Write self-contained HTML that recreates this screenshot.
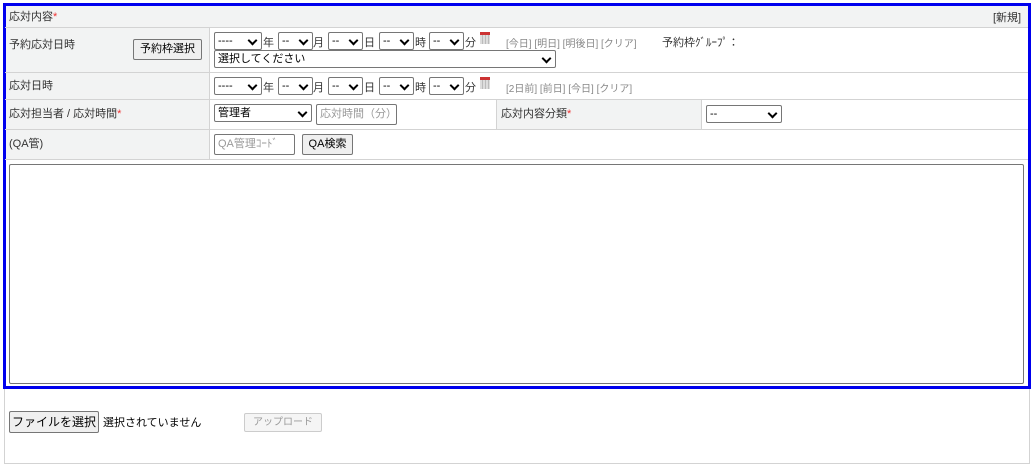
<!DOCTYPE html><html><head><meta charset="utf-8"><style>
*{box-sizing:border-box;margin:0;padding:0}
body{width:1033px;height:468px;background:#fff;font-family:"Liberation Sans","Noto Sans CJK JP",sans-serif;font-size:11px;color:#333;position:relative;overflow:hidden}
.a{position:absolute}
.sel{position:absolute;height:18px;border:1px solid #767676;border-radius:2px;background:#fff;font-size:11px;padding-left:3px;line-height:16px;color:#000}
.sel::after{content:"";position:absolute;right:5px;top:4px;width:5px;height:5px;border-right:2px solid #000;border-bottom:2px solid #000;transform:rotate(45deg)}
.btn{position:absolute;border:1px solid #767676;border-radius:2px;background:#efefef;font-size:11px;text-align:center;color:#000}
.inp{position:absolute;border:1px solid #767676;border-radius:2px;background:#fff;color:#999;font-size:11px;padding-left:3px}
.hl{position:absolute;left:5px;right:5px;height:1px;background:#d3d3d3}
.cal{position:absolute;width:10px;height:12px;background:repeating-linear-gradient(90deg,#ddd 0 2px,#bbb 2px 3px);border-top:3px solid #c33}
.lk{position:absolute;color:#888;font-size:10px}
.r{color:#e33}
</style></head><body>
<div class="a" style="left:4px;top:388px;width:1026px;height:76px;border:1px solid #d3d3d3;border-top:none"></div>
<div class="a" style="left:3px;top:3px;width:1028px;height:386px;border:3px solid #0000ee"></div>
<div class="a" style="left:6px;top:6px;width:1022px;height:21px;background:#f2f3f3"></div>
<div class="a" style="left:6px;top:27px;width:203px;height:132px;background:#f2f3f3"></div>
<div class="a" style="left:496px;top:99px;width:205px;height:30px;background:#f2f3f3"></div>
<div class="hl" style="top:27px"></div><div class="hl" style="top:72px"></div><div class="hl" style="top:99px"></div><div class="hl" style="top:129px"></div><div class="hl" style="top:159px"></div>
<div class="a" style="left:209px;top:27px;width:1px;height:132px;background:#d3d3d3"></div>
<div class="a" style="left:496px;top:99px;width:1px;height:30px;background:#d3d3d3"></div>
<div class="a" style="left:701px;top:99px;width:1px;height:30px;background:#d3d3d3"></div>
<div class="a" style="left:9px;top:8px">応対内容<span class="r">*</span></div>
<div class="a" style="left:993px;top:9px">[新規]</div>
<div class="a" style="left:9px;top:36px">予約応対日時</div>
<div class="btn" style="left:133px;top:39px;width:69px;height:21px;line-height:19px">予約枠選択</div>
<div class="a" style="left:9px;top:77px">応対日時</div>
<div class="a" style="left:9px;top:105px">応対担当者 / 応対時間<span class="r">*</span></div>
<div class="a" style="left:9px;top:135px">(QA管)</div>
<div class="sel" style="left:214px;top:32px;width:48px">----</div><div class="a" style="left:263px;top:34px">年</div>
<div class="sel" style="left:278px;top:32px;width:35px">--</div><div class="a" style="left:313px;top:34px">月</div>
<div class="sel" style="left:328px;top:32px;width:35px">--</div><div class="a" style="left:364px;top:34px">日</div>
<div class="sel" style="left:379px;top:32px;width:35px">--</div><div class="a" style="left:415px;top:34px">時</div>
<div class="sel" style="left:429px;top:32px;width:35px">--</div><div class="a" style="left:465px;top:34px">分</div>
<div class="cal" style="left:480px;top:32px"></div>
<div class="lk" style="left:506px;top:35px">[今日] [明日] [明後日] [クリア]</div>
<div class="a" style="left:662px;top:34px">予約枠ｸﾞﾙｰﾌﾟ：</div>
<div class="sel" style="left:214px;top:50px;width:342px">選択してください</div>
<div class="sel" style="left:214px;top:77px;width:48px">----</div><div class="a" style="left:263px;top:79px">年</div>
<div class="sel" style="left:278px;top:77px;width:35px">--</div><div class="a" style="left:313px;top:79px">月</div>
<div class="sel" style="left:328px;top:77px;width:35px">--</div><div class="a" style="left:364px;top:79px">日</div>
<div class="sel" style="left:379px;top:77px;width:35px">--</div><div class="a" style="left:415px;top:79px">時</div>
<div class="sel" style="left:429px;top:77px;width:35px">--</div><div class="a" style="left:465px;top:79px">分</div>
<div class="cal" style="left:480px;top:77px"></div>
<div class="lk" style="left:506px;top:80px">[2日前] [前日] [今日] [クリア]</div>
<div class="sel" style="left:214px;top:104px;width:98px">管理者</div>
<div class="inp" style="left:316px;top:104px;width:81px;height:21px;line-height:19px">応対時間（分）</div>
<div class="a" style="left:501px;top:105px">応対内容分類<span class="r">*</span></div>
<div class="sel" style="left:706px;top:105px;width:76px">--</div>
<div class="inp" style="left:214px;top:134px;width:81px;height:21px;line-height:19px">QA管理ｺｰﾄﾞ</div>
<div class="btn" style="left:302px;top:134px;width:51px;height:21px;line-height:19px">QA検索</div>
<div class="a" style="left:9px;top:164px;width:1015px;height:220px;border:1px solid #767676;border-radius:2px"></div>
<div class="btn" style="left:9px;top:411px;width:90px;height:22px;line-height:20px;font-size:12px">ファイルを選択</div>
<div class="a" style="left:103px;top:414px;font-size:11px;color:#000">選択されていません</div>
<div class="btn" style="left:244px;top:413px;width:78px;height:19px;line-height:17px;border-color:#ccc;color:#999;background:#f5f5f5;font-size:10px">アップロード</div>
</body></html>
